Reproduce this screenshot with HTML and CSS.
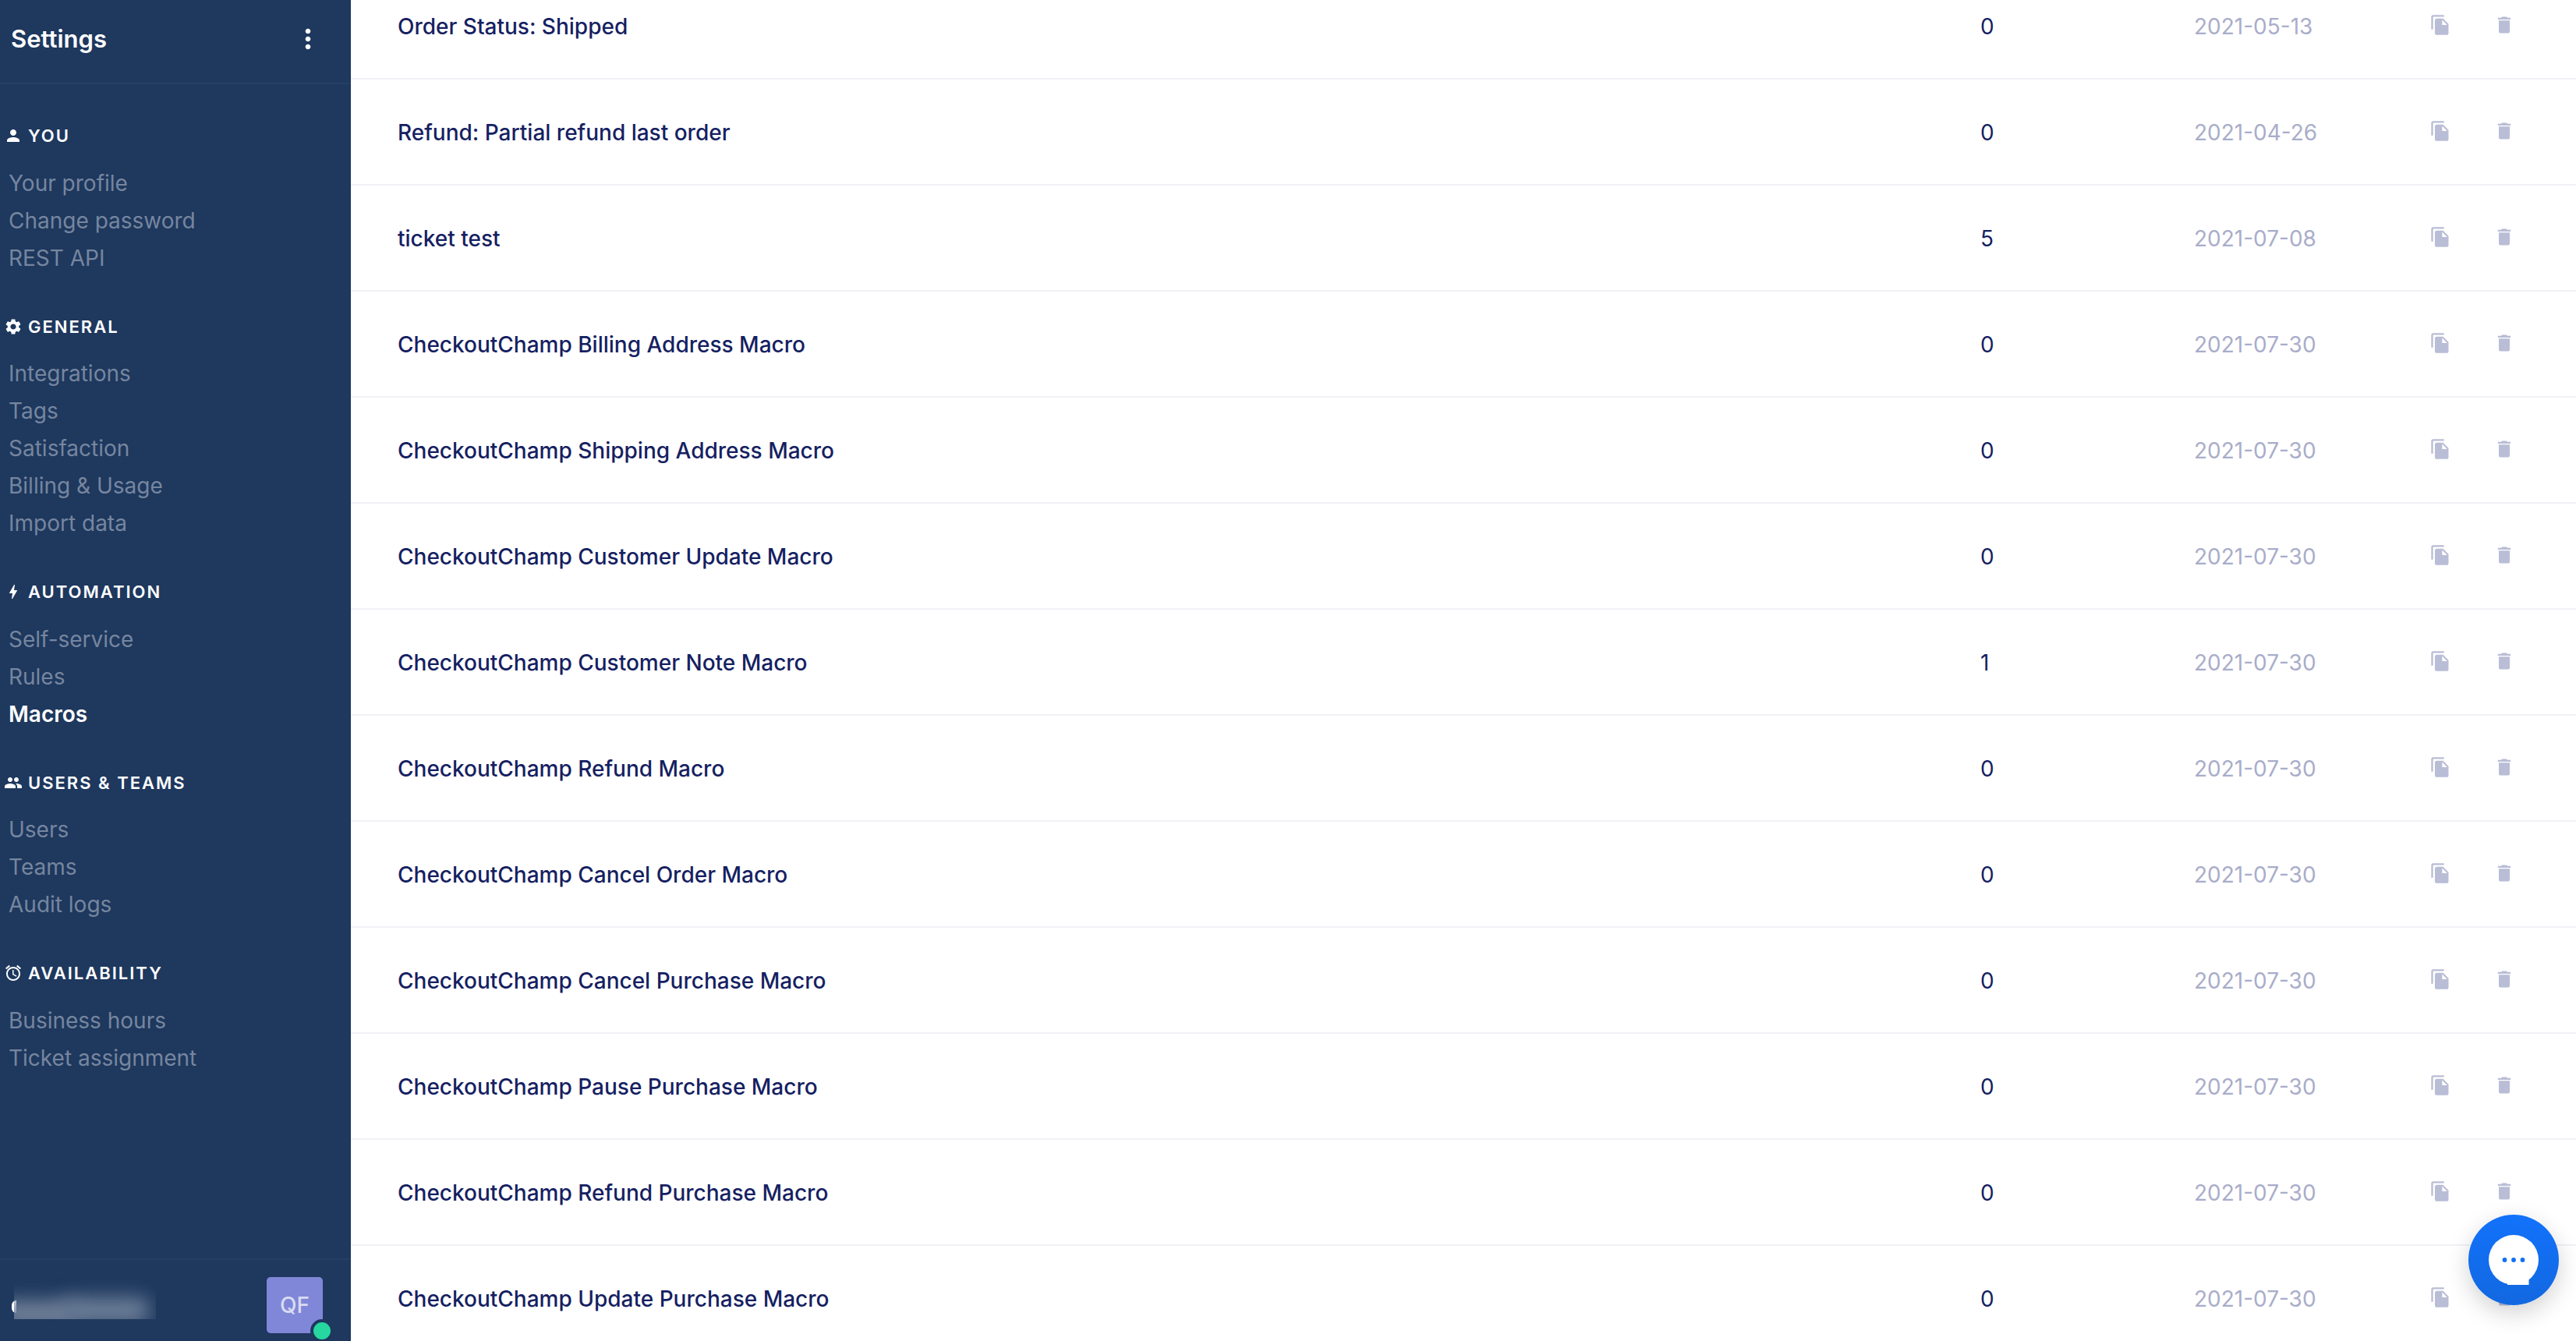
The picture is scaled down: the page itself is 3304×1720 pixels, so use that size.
FILE: index.html
```html
<!DOCTYPE html>
<html lang="en">
<head>
<meta charset="utf-8">
<title>Macros - Settings</title>
<link rel="stylesheet" href="styles.css">
</head>
<body>
<div class="app">
  <aside class="sidebar">
    <header class="side-head">
      <span class="side-title">Settings</span>
      <svg class="kebab" viewBox="0 0 24 24"><path d="M12 8c1.1 0 2-.9 2-2s-.9-2-2-2-2 .9-2 2 .9 2 2 2zm0 2c-1.1 0-2 .9-2 2s.9 2 2 2 2-.9 2-2-.9-2-2-2zm0 6c-1.1 0-2 .9-2 2s.9 2 2 2 2-.9 2-2-.9-2-2-2z"/></svg>
    </header>
    <nav class="side-nav">
      <section class="group">
        <h2 class="group-title"><svg viewBox="0 0 24 24"><path d="M12 12c2.21 0 4-1.79 4-4s-1.79-4-4-4-4 1.79-4 4 1.79 4 4 4zm0 2c-2.67 0-8 1.34-8 4v2h16v-2c0-2.66-5.33-4-8-4z"/></svg>YOU</h2>
        <a class="item">Your profile</a>
        <a class="item">Change password</a>
        <a class="item">REST API</a>
      </section>
      <section class="group">
        <h2 class="group-title"><svg viewBox="0 0 24 24"><path d="M19.14 12.94c.04-.3.06-.61.06-.94 0-.32-.02-.64-.07-.94l2.03-1.58c.18-.14.23-.41.12-.61l-1.92-3.32c-.12-.22-.37-.29-.59-.22l-2.39.96c-.5-.38-1.03-.7-1.62-.94l-.36-2.54c-.04-.24-.24-.41-.48-.41h-3.84c-.24 0-.43.17-.47.41l-.36 2.54c-.59.24-1.13.57-1.62.94l-2.39-.96c-.22-.08-.47 0-.59.22L2.74 8.87c-.12.21-.08.47.12.61l2.03 1.58c-.05.3-.09.63-.09.94s.02.64.07.94l-2.03 1.58c-.18.14-.23.41-.12.61l1.92 3.32c.12.22.37.29.59.22l2.39-.96c.5.38 1.03.7 1.62.94l.36 2.54c.05.24.24.41.48.41h3.84c.24 0 .44-.17.47-.41l.36-2.54c.59-.24 1.13-.56 1.62-.94l2.39.96c.22.08.47 0 .59-.22l1.92-3.32c.12-.22.07-.47-.12-.61l-2.01-1.58zM12 15.6c-1.98 0-3.6-1.62-3.6-3.6s1.62-3.6 3.6-3.6 3.6 1.62 3.6 3.6-1.62 3.6-3.6 3.6z"/></svg>GENERAL</h2>
        <a class="item">Integrations</a>
        <a class="item">Tags</a>
        <a class="item">Satisfaction</a>
        <a class="item">Billing &amp; Usage</a>
        <a class="item">Import data</a>
      </section>
      <section class="group">
        <h2 class="group-title"><svg viewBox="0 0 24 24"><path d="M11 21h-1l1-7H7.5c-.58 0-.57-.32-.38-.66.19-.34.05-.08.07-.12C8.48 10.94 10.42 7.54 13 3h1l-1 7h3.5c.49 0 .56.33.47.51l-.07.15C12.96 17.55 11 21 11 21z"/></svg>AUTOMATION</h2>
        <a class="item">Self-service</a>
        <a class="item">Rules</a>
        <a class="item item-active">Macros</a>
      </section>
      <section class="group">
        <h2 class="group-title"><svg viewBox="0 0 24 24"><path d="M16 11c1.66 0 2.99-1.34 2.99-3S17.66 5 16 5c-1.66 0-3 1.34-3 3s1.34 3 3 3zm-8 0c1.66 0 2.99-1.34 2.99-3S9.66 5 8 5C6.34 5 5 6.34 5 8s1.34 3 3 3zm0 2c-2.33 0-7 1.17-7 3.5V19h14v-2.5c0-2.33-4.67-3.5-7-3.5zm8 0c-.29 0-.62.02-.97.05 1.16.84 1.97 1.97 1.97 3.45V19h6v-2.5c0-2.33-4.67-3.5-7-3.5z"/></svg>USERS &amp; TEAMS</h2>
        <a class="item">Users</a>
        <a class="item">Teams</a>
        <a class="item">Audit logs</a>
      </section>
      <section class="group">
        <h2 class="group-title"><svg viewBox="0 0 24 24"><path d="M22 5.72l-4.6-3.86-1.29 1.53 4.6 3.86L22 5.72zM7.88 3.39L6.6 1.86 2 5.71l1.29 1.53 4.59-3.85zM12.5 8H11v6l4.75 2.85.75-1.23-4-2.37V8zM12 4c-4.97 0-9 4.03-9 9s4.02 9 9 9c4.97 0 9-4.03 9-9s-4.03-9-9-9zm0 16c-3.87 0-7-3.13-7-7s3.13-7 7-7 7 3.13 7 7-3.13 7-7 7z"/></svg>AVAILABILITY</h2>
        <a class="item">Business hours</a>
        <a class="item">Ticket assignment</a>
      </section>
    </nav>
    <footer class="side-foot">
      <div class="user-name">
        <span class="name-sliver"></span>
        <div class="name-blur"><span class="blob blob-a"></span><span class="blob blob-b"></span></div>
      </div>
      <div class="avatar">QF<span class="status-dot"></span></div>
    </footer>
  </aside>

  <main class="main">
    <svg class="icon-defs" aria-hidden="true">
      <symbol id="i-copy" viewBox="0 0 24 24"><path d="M16 1H4c-1.1 0-2 .9-2 2v14h2V3h12V1zm-1 4l6 6v10c0 1.1-.9 2-2 2H7.99C6.89 23 6 22.1 6 21l.01-14c0-1.1.89-2 1.99-2h7zm-1 7h5.5L14 6.5V12z"/></symbol>
      <symbol id="i-trash" viewBox="0 0 24 24"><path d="M6 19c0 1.1.9 2 2 2h8c1.1 0 2-.9 2-2V7H6v12zM19 4h-3.5l-1-1h-5l-1 1H5v2h14V4z"/></symbol>
    </svg>
    <div class="list">
      <div class="row"><a class="name">Order Status: Shipped</a><span class="count">0</span><span class="date">2021-05-13</span><svg class="act"><use href="#i-copy"/></svg><svg class="act"><use href="#i-trash"/></svg></div>
      <div class="row"><a class="name">Refund: Partial refund last order</a><span class="count">0</span><span class="date">2021-04-26</span><svg class="act"><use href="#i-copy"/></svg><svg class="act"><use href="#i-trash"/></svg></div>
      <div class="row"><a class="name">ticket test</a><span class="count">5</span><span class="date">2021-07-08</span><svg class="act"><use href="#i-copy"/></svg><svg class="act"><use href="#i-trash"/></svg></div>
      <div class="row"><a class="name">CheckoutChamp Billing Address Macro</a><span class="count">0</span><span class="date">2021-07-30</span><svg class="act"><use href="#i-copy"/></svg><svg class="act"><use href="#i-trash"/></svg></div>
      <div class="row"><a class="name">CheckoutChamp Shipping Address Macro</a><span class="count">0</span><span class="date">2021-07-30</span><svg class="act"><use href="#i-copy"/></svg><svg class="act"><use href="#i-trash"/></svg></div>
      <div class="row"><a class="name">CheckoutChamp Customer Update Macro</a><span class="count">0</span><span class="date">2021-07-30</span><svg class="act"><use href="#i-copy"/></svg><svg class="act"><use href="#i-trash"/></svg></div>
      <div class="row"><a class="name">CheckoutChamp Customer Note Macro</a><span class="count">1</span><span class="date">2021-07-30</span><svg class="act"><use href="#i-copy"/></svg><svg class="act"><use href="#i-trash"/></svg></div>
      <div class="row"><a class="name">CheckoutChamp Refund Macro</a><span class="count">0</span><span class="date">2021-07-30</span><svg class="act"><use href="#i-copy"/></svg><svg class="act"><use href="#i-trash"/></svg></div>
      <div class="row"><a class="name">CheckoutChamp Cancel Order Macro</a><span class="count">0</span><span class="date">2021-07-30</span><svg class="act"><use href="#i-copy"/></svg><svg class="act"><use href="#i-trash"/></svg></div>
      <div class="row"><a class="name">CheckoutChamp Cancel Purchase Macro</a><span class="count">0</span><span class="date">2021-07-30</span><svg class="act"><use href="#i-copy"/></svg><svg class="act"><use href="#i-trash"/></svg></div>
      <div class="row"><a class="name">CheckoutChamp Pause Purchase Macro</a><span class="count">0</span><span class="date">2021-07-30</span><svg class="act"><use href="#i-copy"/></svg><svg class="act"><use href="#i-trash"/></svg></div>
      <div class="row"><a class="name">CheckoutChamp Refund Purchase Macro</a><span class="count">0</span><span class="date">2021-07-30</span><svg class="act"><use href="#i-copy"/></svg><svg class="act"><use href="#i-trash"/></svg></div>
      <div class="row"><a class="name">CheckoutChamp Update Purchase Macro</a><span class="count">0</span><span class="date">2021-07-30</span><svg class="act"><use href="#i-copy"/></svg><svg class="act"><use href="#i-trash"/></svg></div>
    </div>
  </main>
</div>

<button class="chat" type="button" aria-label="Open chat">
  <svg viewBox="0 0 116 116">
    <circle cx="58" cy="58" r="32" fill="#fff"/>
    <rect x="50" y="60" width="27.5" height="30" fill="#fff"/>
    <circle cx="46.5" cy="58" r="2.9" fill="#1170f5"/>
    <circle cx="58" cy="58" r="2.9" fill="#1170f5"/>
    <circle cx="69.5" cy="58" r="2.9" fill="#1170f5"/>
  </svg>
</button>
</body>
</html>
```

FILE: styles.css
```css
* { box-sizing: border-box; }
html, body { margin: 0; height: 100%; }
body {
  font-family: Inter, "Liberation Sans", sans-serif;
  font-size: 28px;
  background: #fff;
  overflow: hidden;
}
.app { display: flex; height: 1720px; }

/* sidebar */
.sidebar {
  width: 450px;
  flex: none;
  display: flex;
  flex-direction: column;
  background: #1e385e;
  color: #fff;
}
.side-head {
  height: 108px;
  flex: none;
  display: flex;
  align-items: center;
  justify-content: space-between;
  padding: 0 35px 6px 14px;
  border-bottom: 2px solid #263f66;
}
.side-title { font-size: 31px; font-weight: 600; margin-bottom: 2px; }
.kebab { width: 40px; height: 40px; fill: #fff; }
.side-nav { flex: 1; padding-top: 50px; display: flex; flex-direction: column; gap: 48px; }
.group { display: flex; flex-direction: column; }
.group-title {
  display: flex;
  align-items: center;
  gap: 7px;
  height: 32px;
  margin: 0 0 20.5px;
  padding-left: 5px;
  font-size: 22px;
  font-weight: 600;
  letter-spacing: 2px;
  color: #fff;
}
.group-title svg { width: 24px; height: 24px; fill: #fff; flex: none; }
.item {
  height: 48px;
  line-height: 48px;
  padding-left: 11px;
  font-size: 28px;
  color: #76869f;
}
.item-active { color: #fff; font-weight: 600; }

.side-foot {
  height: 106px;
  flex: none;
  border-top: 2px solid #263f66;
  display: flex;
  align-items: flex-start;
  justify-content: space-between;
  padding: 22px 36px 0 15px;
}
.user-name { display: flex; align-items: flex-end; height: 54px; }
.name-sliver {
  width: 6px;
  height: 16px;
  margin-bottom: 8px;
  margin-right: -3px;
  border-radius: 8px 0 0 8px;
  background: #fff;
}
.name-blur {
  position: relative;
  width: 182px;
  height: 52px;
  overflow: hidden;
}
.blob {
  position: absolute;
  display: block;
  height: 34px;
  border-radius: 14px;
  filter: blur(12px);
}
.blob-a { left: -20px; top: 28px; width: 100px; background: #73839a; }
.blob-b { left: 62px; top: 24px; width: 112px; background: #6d7f99; }
.avatar {
  position: relative;
  width: 72px;
  height: 72px;
  border-radius: 5px;
  background: #8087d8;
  color: #d9dbf3;
  font-weight: 500;
  display: flex;
  align-items: center;
  justify-content: center;
}
.status-dot {
  position: absolute;
  right: -14px;
  bottom: -12px;
  width: 30px;
  height: 30px;
  border-radius: 50%;
  background: #26d79f;
  border: 4px solid #1e385e;
}

/* list */
.main { flex: 1; min-width: 0; overflow: hidden; }
.icon-defs { display: none; }
.list { margin-top: -34px; }
.row {
  display: grid;
  grid-template-columns: 2030px 274px 302px 82px 28px;
  align-items: center;
  height: 136px;
  padding-left: 60px;
  border-bottom: 2px solid #f1f1f6;
}
.name, .count, .date { padding-top: 2px; }
.name { color: #161f62; font-weight: 500; }
.count { color: #161f62; }
.date { color: #a9adca; }
.act { width: 28px; height: 28px; margin-bottom: 2px; fill: #b9bdd5; }

/* chat launcher */
.chat {
  position: fixed;
  left: 3166px;
  top: 1558px;
  width: 116px;
  height: 116px;
  padding: 0;
  border: 0;
  border-radius: 50%;
  background: linear-gradient(180deg, #1272fb, #1268e0);
  box-shadow: 0 10px 30px rgba(0, 0, 0, .18);
}
.chat svg { display: block; width: 116px; height: 116px; }
```
